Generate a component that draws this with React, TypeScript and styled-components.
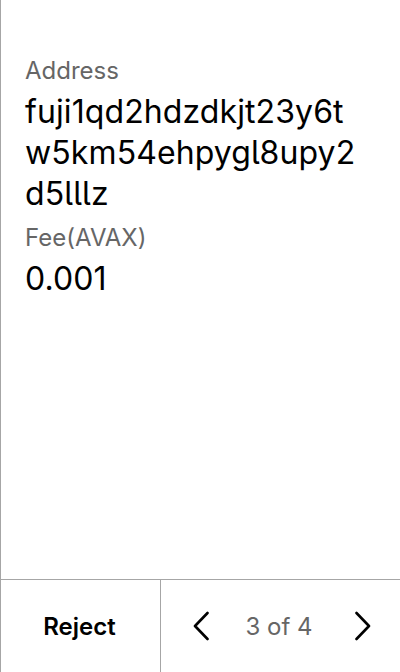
import styled, { createGlobalStyle } from 'styled-components';

const GlobalStyle = createGlobalStyle`
  html, body {
    margin: 0;
    padding: 0;
    background: #ffffff;
  }
  body {
    font-family: Inter, "Noto Sans", sans-serif;
    color: #000;
  }
`;

const Screen = styled.div`
  width: 400px;
  height: 672px;
  box-sizing: border-box;
  border-left: 1px solid #a6a6a6;
  display: flex;
  flex-direction: column;
  background: #fff;
`;

const Content = styled.div`
  flex: 1;
  padding: 55px 37px 0 24px;
  display: flex;
  flex-direction: column;
`;

const Label = styled.div`
  font-size: 24px;
  line-height: 32px;
  color: #666666;
  margin-bottom: 4px;
`;

const Value = styled.div`
  font-size: 32px;
  line-height: 41px;
  letter-spacing: 0.1px;
  color: #000;
  word-break: break-all;
  font-feature-settings: "cv05" 1;
  margin-bottom: 8px;
`;

const Footer = styled.div`
  height: 92px;
  border-top: 1px solid #a6a6a6;
  display: flex;
`;

const RejectButton = styled.button`
  width: 160px;
  border: none;
  border-right: 1px solid #a6a6a6;
  background: transparent;
  font-family: Inter, "Noto Sans", sans-serif;
  font-size: 24px;
  font-weight: 600;
  color: #000;
  padding: 0 2px 0 0;
  cursor: pointer;
`;

const Pager = styled.div`
  flex: 1;
  display: flex;
  align-items: center;
  justify-content: space-between;
  padding: 0 28px 0 31px;
`;

const ArrowButton = styled.button`
  width: 18px;
  height: 32px;
  border: none;
  background: transparent;
  padding: 0;
  display: flex;
  align-items: center;
  justify-content: center;
  cursor: pointer;
`;

const PageText = styled.span`
  font-size: 24px;
  color: #666666;
  margin-right: 6px;
`;

function Chevron({ dir }: { dir: 'left' | 'right' }) {
  return (
    <svg width="16" height="30" viewBox="0 0 16 30" fill="none">
      <path
        d={dir === 'left' ? 'M14.5 2 L2 15 L14.5 28' : 'M1.5 2 L14 15 L1.5 28'}
        stroke="#000"
        strokeWidth="2.6"
        strokeLinecap="round"
        strokeLinejoin="round"
      />
    </svg>
  );
}

export default function App() {
  return (
    <>
      <GlobalStyle />
      <Screen>
        <Content>
          <Label>Address</Label>
          <Value>fuji1qd2hdzdkjt23y6tw5km54ehpygl8upy2d5lllz</Value>
          <Label>Fee(AVAX)</Label>
          <Value>0.001</Value>
        </Content>
        <Footer>
          <RejectButton>Reject</RejectButton>
          <Pager>
            <ArrowButton>
              <Chevron dir="left" />
            </ArrowButton>
            <PageText>3 of 4</PageText>
            <ArrowButton>
              <Chevron dir="right" />
            </ArrowButton>
          </Pager>
        </Footer>
      </Screen>
    </>
  );
}
